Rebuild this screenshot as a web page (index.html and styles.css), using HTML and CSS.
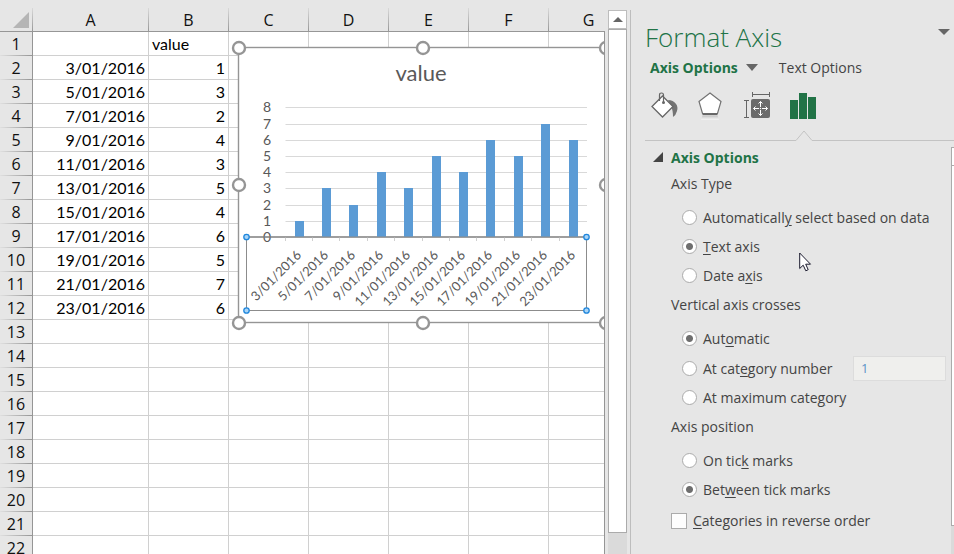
FILE: index.html
```
<!DOCTYPE html>
<html lang="en">
<head>
  <meta charset="UTF-8">
  <meta name="viewport" content="width=device-width, initial-scale=1.0">
  <title>Format Axis</title>
  <link rel="stylesheet" href="styles.css">
</head>
<body>
  <div class="app">
    <!-- Worksheet -->
    <main class="sheet">
      <table class="grid">
        <colgroup>
          <col class="col-num"><col class="col-a"><col><col><col><col><col><col>
        </colgroup>
        <thead>
          <tr>
            <th class="corner"><svg width="16" height="16"><path d="M16 0V16H0Z" fill="#b5b5b5"/></svg></th>
            <th>A</th><th>B</th><th>C</th><th>D</th><th>E</th><th>F</th><th>G</th>
          </tr>
        </thead>
        <tbody id="rows"></tbody>
      </table>

      <svg class="chart" width="384" height="292" viewBox="230 40 384 292">
        <rect x="238.5" y="47.5" width="368" height="275" fill="#fff" stroke="#959595" stroke-width="1.4"/>
        <text class="chart-title" x="421" y="81" text-anchor="middle">value</text>
        <g id="plot"></g>
        <rect x="246.5" y="237" width="340" height="73.5" fill="none" stroke="#8c8c8c"/>
        <g fill="#a8d4f7" stroke="#1f86dc" stroke-width="1.3">
          <circle cx="246.5" cy="237" r="2.7"/>
          <circle cx="586.5" cy="237" r="2.7"/>
          <circle cx="246.5" cy="310.5" r="2.7"/>
          <circle cx="586.5" cy="310.5" r="2.7"/>
        </g>
        <g fill="#fff" stroke="#959595" stroke-width="2.4">
          <circle cx="239" cy="48" r="6"/>
          <circle cx="423" cy="48" r="6"/>
          <circle cx="606" cy="48" r="6"/>
          <circle cx="239" cy="185" r="6"/>
          <circle cx="606" cy="185" r="6"/>
          <circle cx="239" cy="323" r="6"/>
          <circle cx="423" cy="323" r="6"/>
          <circle cx="606" cy="323" r="6"/>
        </g>
      </svg>
    </main>

    <div class="scrollbar">
      <button class="scroll-up" aria-label="Scroll up"><svg width="10" height="5"><path d="M0 5L5 0L10 5Z" fill="#666"/></svg></button>
      <div class="scroll-thumb"></div>
    </div>

    <!-- Format pane -->
    <aside class="pane">
      <header class="pane-header">
        <h1>Format Axis</h1>
        <button class="pane-menu" aria-label="Task pane options"><svg width="12" height="6"><path d="M0 0H12L6 6Z" fill="#666"/></svg></button>
      </header>

      <nav class="tabs">
        <button class="tab active">Axis Options <svg width="12" height="7"><path d="M0 0H12L6 7Z" fill="#666"/></svg></button>
        <button class="tab">Text Options</button>
      </nav>

      <div class="icons">
        <button aria-label="Fill and line">
          <svg width="28" height="28" viewBox="0 0 28 28">
            <path d="M17 8C24 8 28 14 26 19Q25 23 22 25Q22 18 20 14Z" fill="#737373"/>
            <path d="M11.5 4L22 14.500L11.500 25L1 14.500Z" fill="#fff" stroke="#666" stroke-width="1.3"/>
            <path d="M8.5 9V3Q8.500 1 10.500 1T12.500 3V10" fill="none" stroke="#666" stroke-width="1.2"/>
            <circle cx="12.5" cy="10.5" r="1.5" fill="#666"/>
          </svg>
        </button>
        <button aria-label="Effects">
          <svg width="28" height="28" viewBox="0 0 28 28">
            <defs><linearGradient id="reflect" x1="0" y1="0" x2="0" y2="1"><stop offset="0" stop-color="#bbb"/><stop offset="1" stop-color="#fff" stop-opacity=".5"/></linearGradient></defs>
            <path d="M5.5 23.500H20.500L22 28H4Z" fill="url(#reflect)"/>
            <path d="M13 1L24 9.500L20.500 21.500H5.500L2 9.500Z" fill="#fff" stroke="#737373" stroke-width="1.2"/>
            <path d="M5.5 22.200H20.500" stroke="#666" stroke-width="1.6"/>
          </svg>
        </button>
        <button aria-label="Size and properties">
          <svg width="28" height="28" viewBox="0 0 28 28">
            <path d="M9.5 0V5M26.500 0V5M9.500 2.500H26.500M1 8.500H6M1 25.500H6M3.500 8.500V25.500" stroke="#666" fill="none"/>
            <rect x="8" y="7" width="19" height="19" rx="2" fill="#6b6b6b"/>
            <path d="M17.5 9.500V15M17.500 18V23.500M10.500 16.500H16M19 16.500H24.500M15.500 11.500L17.500 9.500L19.500 11.500M15.500 21.500L17.500 23.500L19.500 21.500M12.500 14.500L10.500 16.500L12.500 18.500M22.500 14.500L24.500 16.500L22.500 18.500" stroke="#fff" fill="none"/>
            <circle cx="17.5" cy="16.5" r=".7" fill="#fff"/>
          </svg>
        </button>
        <button aria-label="Axis options">
          <svg width="28" height="28" viewBox="0 0 28 28"><path d="M1 8h8v19H1zM10 1h8v26h-8zM19 5h8v22h-8z" fill="#217346"/></svg>
        </button>
      </div>

      <div class="divider"><svg width="18" height="11"><path d="M0 10.500H1L9 1L17 10.500H18" fill="#e6e6e6" stroke="#c3c3c3"/></svg></div>

      <div class="options">
        <h2><svg width="10" height="10"><path d="M10 0V10H0Z" fill="#444"/></svg>Axis Options</h2>

        <fieldset>
          <legend>Axis Type</legend>
          <label><input type="radio" name="type"><span>Automaticall<u>y</u> select based on data</span></label>
          <label><input type="radio" name="type" checked><span><u>T</u>ext axis</span></label>
          <label><input type="radio" name="type"><span>Date a<u>x</u>is</span></label>
        </fieldset>

        <fieldset>
          <legend>Vertical axis crosses</legend>
          <label><input type="radio" name="cross" checked><span>Aut<u>o</u>matic</span></label>
          <div class="with-field">
            <label><input type="radio" name="cross"><span>At cat<u>e</u>gory number</span></label>
            <input class="number" type="text" value="1" aria-label="Category number" disabled>
          </div>
          <label><input type="radio" name="cross"><span>At maximum cate<u>g</u>ory</span></label>
        </fieldset>

        <fieldset>
          <legend>Axis position</legend>
          <label><input type="radio" name="pos"><span>On tic<u>k</u> marks</span></label>
          <label><input type="radio" name="pos" checked><span>Bet<u>w</u>een tick marks</span></label>
        </fieldset>

        <label class="check"><input type="checkbox"><span><u>C</u>ategories in reverse order</span></label>
      </div>

      <div class="pane-scroll"><div class="pane-scroll-up"></div><div class="pane-scroll-thumb"></div></div>

      <svg class="cursor" width="13" height="20" viewBox="0 0 13 20"><path d="M.7 1V16.500L4.200 13.200L6.800 18.800L9.200 17.700L6.700 12.200H11.500Z" fill="#fff" stroke="#1a1a2e"/></svg>
    </aside>
  </div>

  <script>
    const data = [
      ["3/01/2016", 1], ["5/01/2016", 3], ["7/01/2016", 2], ["9/01/2016", 4],
      ["11/01/2016", 3], ["13/01/2016", 5], ["15/01/2016", 4], ["17/01/2016", 6],
      ["19/01/2016", 5], ["21/01/2016", 7], ["23/01/2016", 6]
    ];

    // Worksheet rows
    let rows = "";
    for (let r = 1; r <= 22; r++) {
      const item = data[r - 2];
      let a = "", b = "";
      if (r === 1) b = "value";
      if (item) { a = item[0]; b = item[1]; }
      rows += `<tr><th>${r}</th><td>${a}</td><td class="${r === 1 ? "text" : ""}">${b}</td>${"<td></td>".repeat(5)}</tr>`;
    }
    document.getElementById("rows").innerHTML = rows;

    // Chart gridlines, bars and labels
    const left = 285.5, base = 237, step = 27.4, unit = 16.2;
    let plot = `<path d="M246 237H587" stroke="#b0b0b0" stroke-width="2"/>`;
    for (let v = 0; v <= 8; v++) {
      const y = Math.round(base - v * unit);
      plot += `<text class="axis-label" x="271" y="${y + 5}" text-anchor="end">${v}</text>`;
      if (v > 0) plot += `<path d="M${left} ${y + 0.5}H587" stroke="#d9d9d9"/>`;
    }
    data.forEach(([label, value], i) => {
      const x = Math.round(left + step * i + 9);
      const top = Math.round(base - value * unit);
      plot += `<rect x="${x}" y="${top}" width="9" height="${base - top}" fill="#5b9bd5"/>`;
      plot += `<text class="date-label" text-anchor="end" transform="translate(${x + 7} 256) rotate(-45)">${label}</text>`;
      plot += `<path d="M${Math.round(left + step * i) - 0.5} 237V241" stroke="#d0d0d0"/>`;
    });
    document.getElementById("plot").innerHTML = plot;
  </script>
</body>
</html>
```
FILE: styles.css
```
* {
  box-sizing: border-box;
}
body {
  margin: 0;
  background: #e6e6e6;
  font-family: "Open Sans", "Noto Sans", sans-serif;
  font-size: 14px;
  color: #444;
}
button {
  padding: 0;
  border: 0;
  background: none;
  font: inherit;
  color: inherit;
}
svg {
  display: block;
}
.app {
  display: grid;
  grid-template-columns: 1fr 25px 324px;
  height: 100vh;
  overflow: hidden;
}

/* Worksheet */
.sheet {
  position: relative;
  overflow: hidden;
  padding-top: 8px;
}
.sheet::after {
  content: "";
  position: absolute;
  top: 31px;
  right: 0;
  bottom: 0;
  border-right: 1px solid #959595;
}
.grid {
  table-layout: fixed;
  width: 629px;
  border-collapse: separate;
  border-spacing: 0;
}
.grid col {
  width: 80px;
}
.grid .col-num {
  width: 33px;
}
.grid .col-a {
  width: 116px;
}
.grid th,
.grid td {
  height: 24px;
  padding: 0 3px;
  line-height: 22px;
  border-right: 1px solid #d0d0d0;
  border-bottom: 1px solid #d0d0d0;
}
.grid th {
  padding: 0;
  font-size: 16px;
  font-weight: normal;
  color: #111;
}
.grid td {
  background: #fff;
  font-family: Lato, sans-serif;
  font-size: 16px;
  text-align: right;
  color: #000;
}
.grid td.text {
  text-align: left;
}
.grid thead th {
  border-right: 1px solid;
  border-image: linear-gradient(#dcdcdc, #959595) 1;
  border-bottom: 1px solid #959595;
}
.grid tbody th {
  border-right: 1px solid #959595;
  border-bottom: 0;
  background: linear-gradient(90deg, #e0e0e0, #959595) bottom / 100% 1px no-repeat;
}
.grid .corner svg {
  margin-left: 13px;
}
.chart {
  position: absolute;
  left: 230px;
  top: 40px;
  font-family: Lato, sans-serif;
}
.chart-title {
  font-size: 22px;
  fill: #595959;
}
.axis-label {
  font-size: 14px;
  fill: #595959;
}
.date-label {
  font-size: 13px;
  fill: #595959;
}

/* Worksheet scrollbar */
.scrollbar {
  display: flex;
  flex-direction: column;
  width: 19px;
  height: calc(100vh - 10px);
  margin: 10px 0 0 3px;
  background: #dadada;
}
.scroll-up {
  display: flex;
  align-items: center;
  justify-content: center;
  height: 19px;
  border: 1px solid #bdbdbd;
  background: #fff;
}
.scroll-thumb {
  flex: 1;
  margin-bottom: 21px;
  border: 1px solid #ababab;
  background: #fff;
}

/* Format pane */
.pane {
  position: relative;
  margin-top: 10px;
  padding-left: 14px;
  border-left: 1px solid #bdbdbd;
}
.pane-header {
  display: flex;
  justify-content: space-between;
  align-items: flex-start;
  height: 45px;
  padding: 9px 4px 0 0;
}
h1 {
  margin: 0;
  font-size: 26px;
  line-height: 36px;
  font-weight: 300;
  color: #217346;
}
.pane-menu {
  padding-top: 10px;
}
.tabs {
  display: flex;
  gap: 21px;
  height: 24px;
  padding-left: 5px;
}
.tab {
  display: flex;
  align-items: center;
  gap: 8px;
}
.tab.active {
  font-weight: bold;
  color: #217346;
}
.icons {
  display: flex;
  gap: 18px;
  padding: 13px 0 0 6px;
}
.divider {
  display: flex;
  height: 11px;
  margin-top: 10px;
}
.divider::before,
.divider::after {
  content: "";
  border-bottom: 1px solid #c3c3c3;
}
.divider::before {
  width: 150px;
}
.divider::after {
  flex: 1;
}
.options {
  padding: 4px 0 0 26px;
}
h2 {
  display: flex;
  align-items: center;
  gap: 8px;
  height: 24px;
  margin: 0 0 1px -18px;
  font-size: 14px;
  font-weight: bold;
  color: #217346;
}
fieldset {
  min-width: 0;
  margin: 0 0 1px;
  padding: 0;
  border: 0;
}
legend {
  margin-bottom: 5px;
  padding: 0;
  line-height: 28px;
}
label {
  display: flex;
  align-items: center;
  gap: 6px;
  height: 29px;
  padding-left: 11px;
  white-space: nowrap;
}
u {
  text-underline-offset: 2px;
}
input {
  flex: none;
  margin: 0;
  appearance: none;
}
input[type="radio"] {
  width: 15px;
  height: 15px;
  border: 1px solid #ababab;
  border-radius: 50%;
  background: #fff;
}
input[type="radio"]:checked {
  background: radial-gradient(circle, #6e6e6e 3px, #fff 4px);
}
input[type="checkbox"] {
  width: 16px;
  height: 16px;
  border: 1px solid #ababab;
  background: #fdfdfd;
}
.check {
  height: 31px;
  padding-left: 0;
}
.with-field {
  display: flex;
  align-items: center;
  justify-content: space-between;
  height: 30px;
  padding-right: 8px;
}
.number {
  width: 93px;
  height: 25px;
  padding: 0 7px;
  border: 1px solid #dcdcdc;
  background: #efefed;
  font: 13px "Open Sans", sans-serif;
  color: #5b93c7;
}
.pane-scroll {
  position: absolute;
  top: 137px;
  right: 0;
  bottom: 0;
  width: 3px;
  background: #dadada;
}
.pane-scroll-up {
  height: 19px;
  border: solid #ababab;
  border-width: 1px 0 1px 1px;
  background: #fff;
}
.pane-scroll-thumb {
  height: calc(100% - 47px);
  border: solid #ababab;
  border-width: 0 0 1px 1px;
  background: #fff;
}
.cursor {
  position: absolute;
  left: 168px;
  top: 242px;
}
```
